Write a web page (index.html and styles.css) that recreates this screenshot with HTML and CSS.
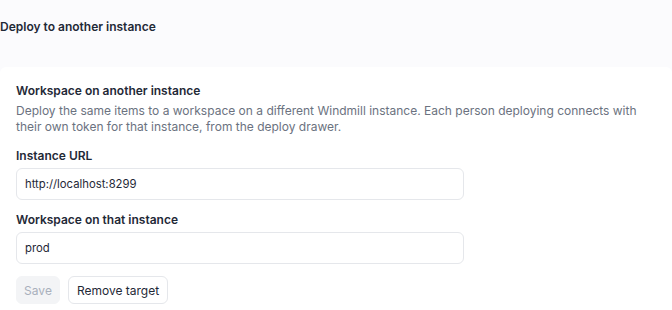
FILE: index.html
```html
<!DOCTYPE html>
<html>
<head>
<meta charset="utf-8">
<link rel="stylesheet" href="styles.css">
</head>
<body>
<div class="page">
  <div class="header">Deploy to another instance</div>
  <div class="card">
    <h3 class="card-title">Workspace on another instance</h3>
    <p class="card-desc">Deploy the same items to a workspace on a different Windmill instance. Each person deploying connects with their own token for that instance, from the deploy drawer.</p>
    <label class="field-label first">Instance URL</label>
    <div class="input">http://localhost:8299</div>
    <label class="field-label">Workspace on that instance</label>
    <div class="input">prod</div>
    <div class="actions">
      <button class="btn btn-disabled">Save</button>
      <button class="btn btn-outline">Remove target</button>
    </div>
  </div>
</div>
</body>
</html>
```
FILE: styles.css
```css
html, body {
  margin: 0;
  padding: 0;
  background: #fbfbfd;
  font-family: Inter, "Noto Sans", sans-serif;
  color: #1f2937;
}
.page {
  width: 672px;
}
.header {
  padding-top: 19px;
  height: 48px;
  font-size: 12px;
  line-height: 16px;
  font-weight: 600;
  color: #1f2937;
}
.card {
  background: #fff;
  border-radius: 6px 6px 0 0;
  padding: 16px 16px 7px;
  display: flex;
  flex-direction: column;
  align-items: flex-start;
}
.card-title {
  margin: 0;
  font-size: 12px;
  line-height: 16px;
  font-weight: 600;
  color: #1f2937;
}
.card-desc {
  margin: 4px 0 0;
  font-size: 12px;
  line-height: 16px;
  color: #6b7280;
  max-width: 630px;
}
.field-label {
  margin-top: 12px;
  font-size: 12px;
  line-height: 16px;
  font-weight: 600;
  color: #1f2937;
}
.field-label.first {
  margin-top: 13px;
}
.input {
  box-sizing: border-box;
  margin-top: 4px;
  width: 448px;
  height: 32px;
  border: 1px solid #e5e7eb;
  border-radius: 6px;
  padding: 0 8px;
  font-size: 11.3px;
  line-height: 30px;
  color: #1f2937;
}
.actions {
  margin-top: 12px;
  display: flex;
  gap: 8px;
}
.btn {
  box-sizing: border-box;
  height: 28px;
  border-radius: 6px;
  font-family: Inter, "Noto Sans", sans-serif;
  font-size: 12px;
  padding: 0;
  white-space: nowrap;
  text-align: center;
  cursor: pointer;
}
.btn-disabled {
  width: 44px;
  background: #f3f4f6;
  border: 1px solid #f3f4f6;
  color: #a9b0bc;
}
.btn-outline {
  width: 100px;
  background: #fff;
  border: 1px solid #e5e7eb;
  color: #1f2937;
}
```
